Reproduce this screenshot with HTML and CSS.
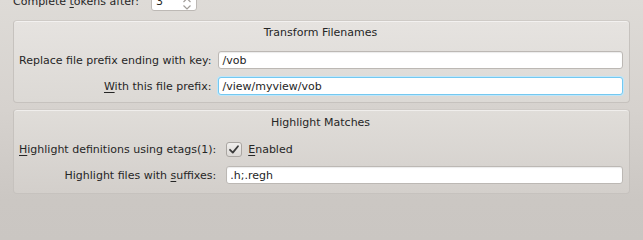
FILE: index.html
```html
<!DOCTYPE html>
<html>
<head>
<meta charset="utf-8">
<link rel="stylesheet" href="styles.css">
</head>
<body>
<div class="page">
  <div class="top-row">
    <span class="label">Complete <u>t</u>okens after:</span>
    <div class="spin">
      <span class="spin-value">3</span>
      <svg class="spin-arrows" width="10" height="17" viewBox="0 0 10 17">
        <path d="M1.5 9 L5 5.5 L8.5 9" fill="none" stroke="#a19d99" stroke-width="1.2"/>
        <path d="M1.5 12.5 L5 16 L8.5 12.5" fill="none" stroke="#a19d99" stroke-width="1.2"/>
      </svg>
    </div>
  </div>

  <section class="group">
    <div class="group-title">Transform Filenames</div>
    <div class="form">
      <label class="flabel">Replace file prefix ending with key:</label>
      <div class="input">/vob</div>
      <label class="flabel"><u>W</u>ith this file prefix:</label>
      <div class="input focused">/view/myview/vob</div>
    </div>
  </section>

  <section class="group second">
    <div class="group-title">Highlight Matches</div>
    <div class="form">
      <label class="flabel"><u>H</u>ighlight definitions using etags(1):</label>
      <div class="check-row">
        <span class="checkbox">
          <svg width="12" height="11" viewBox="0 0 12 11">
            <path d="M2 5.8 L4.8 8.6 L10 2.2" fill="none" stroke="#3b3b3b" stroke-width="1.8" stroke-linecap="round" stroke-linejoin="round"/>
          </svg>
        </span>
        <span class="check-label"><u>E</u>nabled</span>
      </div>
      <label class="flabel">Highlight files with <u>s</u>uffixes:</label>
      <div class="input">.h;.regh</div>
    </div>
  </section>
</div>
</body>
</html>
```

FILE: styles.css
```css
html, body {
  margin: 0;
  padding: 0;
}

body {
  width: 643px;
  height: 240px;
  overflow: hidden;
  font-family: "DejaVu Sans", sans-serif;
  font-size: 11px;
  line-height: 13px;
  color: #262626;
  background: linear-gradient(#dedbd7 0px, #d6d2ce 110px, #cbc7c3 200px, #cac6c2 240px);
}

u {
  text-decoration: underline;
  text-underline-offset: 2px;
}

.page {
  padding: 0 13px;
}

.top-row {
  display: flex;
  align-items: center;
  margin-top: -9px;
  height: 20px;
}

.top-row .label {
  width: 138px;
}

.spin {
  width: 46px;
  height: 19px;
  box-sizing: border-box;
  border: 1px solid #bdb9b5;
  border-radius: 3px;
  background: #fff;
  display: flex;
  align-items: center;
  justify-content: space-between;
  padding: 0 4px 0 4px;
}

.spin-arrows {
  display: block;
}

.group {
  margin-top: 9px;
  border: 1px solid #c6c2be;
  border-top-color: #cfcbc7;
  border-radius: 4px;
  background: linear-gradient(#e6e3e0, #dcd9d5);
  padding: 5px 6px 7px 4px;
  box-shadow: inset 0 1px 0 rgba(255,255,255,0.5);
}

.group.second {
  margin-top: 6px;
  padding-top: 6px;
  padding-bottom: 9px;
  background: linear-gradient(#e0ddd9, #d3cfcb);
}

.group-title {
  text-align: center;
  margin-bottom: 12px;
}

.form {
  display: grid;
  grid-template-columns: max-content 1fr;
  column-gap: 7px;
  row-gap: 8px;
  align-items: center;
}

.second .form {
  column-gap: 10px;
}

.flabel {
  justify-self: end;
  padding-left: 1px;
}

.input {
  height: 18px;
  box-sizing: border-box;
  background: #fff;
  border: 1px solid #bcb8b4;
  border-radius: 3px;
  box-shadow: inset 0 1px 1px rgba(0,0,0,0.08);
  padding: 1px 3px 0 3px;
  line-height: 15px;
  color: #1e1e1e;
}

.input.focused {
  border-color: #74c8f0;
  box-shadow: 0 0 0 1px #bfe6f9;
}

.check-row {
  display: flex;
  align-items: center;
  height: 17px;
}

.checkbox {
  width: 16px;
  height: 15px;
  box-sizing: border-box;
  border: 1px solid #aaa6a2;
  border-radius: 3px;
  background: linear-gradient(#f1efed, #dcd9d6);
  display: flex;
  align-items: center;
  justify-content: center;
}

.check-label {
  margin-left: 6px;
}
```
